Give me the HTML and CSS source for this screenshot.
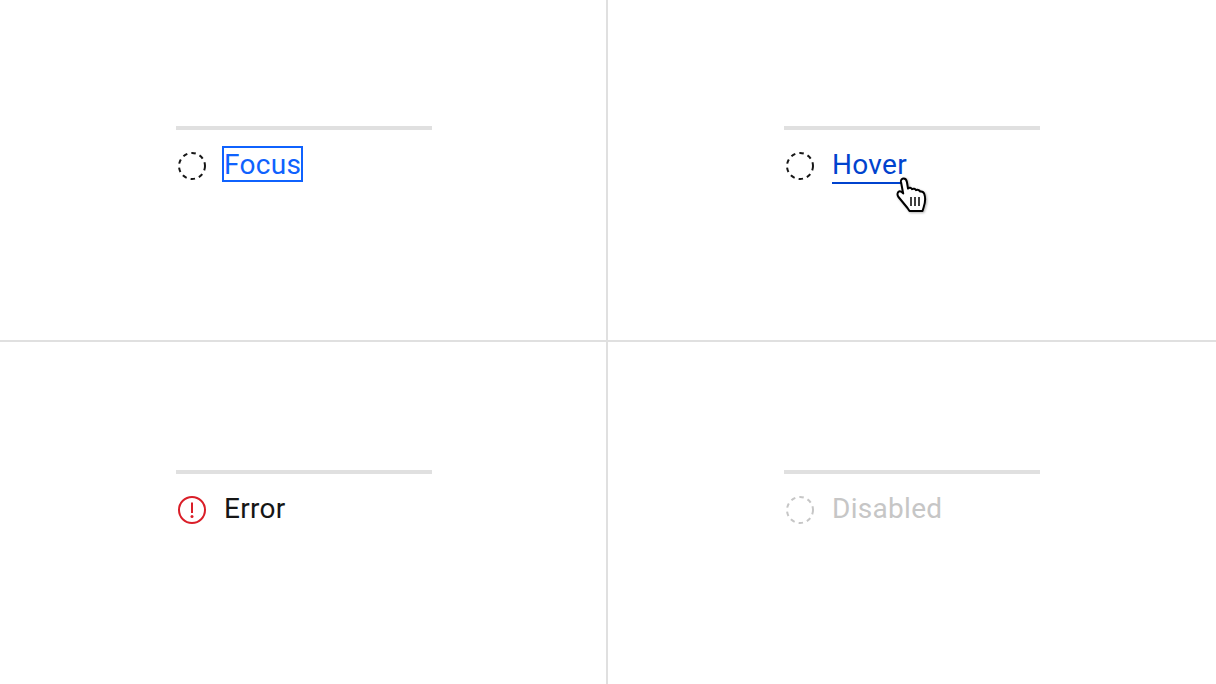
FILE: index.html
```html
<!DOCTYPE html>
<html>
<head>
    <meta name="viewport" content="width=device-width, user-scalable=no">
    <link rel="stylesheet" href="styles.css">
</head>
<body>
<div class="states">
    <div class="cell cell-top">
        <div class="tab-bar"></div>
        <div class="tab">
            <svg class="tab-icon" viewBox="0 0 32 32"><circle class="ring ring-dark" cx="16" cy="16" r="13"/></svg>
            <span class="tab-label label-focus">Focus</span>
        </div>
    </div>
    <div class="cell cell-top">
        <div class="tab-bar"></div>
        <div class="tab">
            <svg class="tab-icon" viewBox="0 0 32 32"><circle class="ring ring-dark" cx="16" cy="16" r="13"/></svg>
            <span class="tab-label label-hover">Hover</span>
            <svg class="pointer" viewBox="0 0 32 36">
                <path class="pointer-shape" d="M5 5C4.700 2.800 6 1.500 7.700 1.500S10.500 2.800 10.900 5L12 11.500C13.200 10.300 15.300 10.500 16 12.200 17.300 11.200 19.300 11.600 20 13.200 21.300 12.400 23.400 12.900 24.200 14.500 25.700 14.200 27.600 15 28.300 17 29.500 20.500 29.500 25 27.600 30.500L26.500 34H13.500L11.500 31 2.500 20C.9 18 1.300 15.200 3 14.500 4.500 14 6 15 7.200 16.500Z"/>
                <path class="pointer-bars" d="M15 20v9M19 20v9M23 20v9"/>
            </svg>
        </div>
    </div>
    <div class="cell cell-bottom">
        <div class="tab-bar"></div>
        <div class="tab">
            <svg class="tab-icon" viewBox="0 0 32 32">
                <circle class="ring ring-error" cx="16" cy="16" r="13"/>
                <rect class="error-mark" x="15" y="8.500" width="2" height="10.500"/>
                <circle class="error-mark" cx="16" cy="22.500" r="1.500"/>
            </svg>
            <span class="tab-label label-error">Error</span>
        </div>
    </div>
    <div class="cell cell-bottom">
        <div class="tab-bar"></div>
        <div class="tab">
            <svg class="tab-icon" viewBox="0 0 32 32"><circle class="ring ring-disabled" cx="16" cy="16" r="13"/></svg>
            <span class="tab-label label-disabled">Disabled</span>
        </div>
    </div>
</div>
</body>
</html>
```
FILE: styles.css
```css
body {
    margin: 0;
    overflow: hidden;
    font-family: Roboto, "Noto Sans", sans-serif;
}

.states {
    width: 1216px;
    height: 684px;
    display: grid;
    grid-template-columns: 606px 608px;
    grid-template-rows: 340px 342px;
    gap: 2px;
    background-color: #e0e0e0;
}

.cell {
    background-color: #fff;
    padding-left: 176px;
}
.cell-top {
    padding-top: 126px;
}
.cell-bottom {
    padding-top: 128px;
}

.tab-bar {
    width: 256px;
    height: 4px;
    background-color: #e0e0e0;
}

.tab {
    position: relative;
    width: 256px;
    margin-top: 18px;
    display: flex;
    align-items: flex-start;
    gap: 16px;
}

.tab-icon {
    width: 32px;
    height: 32px;
    margin-top: 2px;
    flex: none;
}

.ring {
    fill: none;
    stroke-width: 2;
}
.ring-dark {
    stroke: #161616;
    stroke-dasharray: 4.500 4.100;
}
.ring-disabled {
    stroke: #c6c6c6;
    stroke-dasharray: 4.500 4.100;
}
.ring-error {
    stroke: #da1e28;
}
.error-mark {
    fill: #da1e28;
}

.tab-label {
    padding-top: 2px;
    font-size: 28px;
    line-height: 30px;
    letter-spacing: .3px;
}
.label-focus {
    color: #0f62fe;
    outline: 2px solid #0f62fe;
}
.label-hover {
    color: #0043ce;
    padding-bottom: 2px;
    border-bottom: 2px solid #0043ce;
}
.label-error {
    color: #161616;
}
.label-disabled {
    color: #c6c6c6;
}

.pointer {
    position: absolute;
    left: 112px;
    top: 29px;
    width: 32px;
    height: 36px;
    filter: drop-shadow(1px 1px 1px rgba(0, 0, 0, .3));
}
.pointer-shape {
    fill: #fff;
    stroke: #000;
    stroke-width: 2;
    stroke-linejoin: round;
}
.pointer-bars {
    fill: none;
    stroke: #000;
    stroke-width: 1.500;
}
```
